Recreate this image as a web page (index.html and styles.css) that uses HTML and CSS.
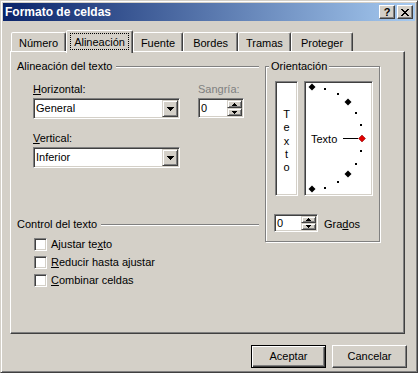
FILE: index.html
```html
<!DOCTYPE html>
<html lang="es">
<head>
    <meta charset="UTF-8">
    <meta name="viewport" content="width=device-width, initial-scale=1.0">
    <title>Formato de celdas</title>
    <link rel="stylesheet" href="styles.css">
</head>
<body>

    <div class="window">
        <div class="titlebar">
            <span class="title">Formato de celdas</span>
            <div class="caption-buttons">
                <span class="cap-btn help">?</span>
                <span class="cap-btn close">
                    <svg width="8" height="7" viewBox="0 0 8 7" shape-rendering="crispEdges">
                        <path d="M0 0h2v1h1v1h2v-1h1v-1h2v1h-1v1h-1v1h-1v1h1v1h1v1h1v1h-2v-1h-1v-1h-2v1h-1v1h-2v-1h1v-1h1v-1h1v-1h-1v-1h-1v-1h-1z" fill="#000"/>
                    </svg>
                </span>
            </div>
        </div>

        <div class="tabs">
            <div class="tab">Número</div>
            <div class="tab active"><span class="focus">Alineación</span></div>
            <div class="tab">Fuente</div>
            <div class="tab tab-wide">Bordes</div>
            <div class="tab">Tramas</div>
            <div class="tab tab-wide">Proteger</div>
        </div>

        <div class="panel">
            <div class="col-left">
                <div class="group-head"><span>Alineación del texto</span><i class="rule"></i></div>

                <div class="fields-row">
                    <div class="field field-horizontal">
                        <label><u>H</u>orizontal:</label>
                        <div class="combo sunken">
                            <span class="combo-value">General</span>
                            <span class="drop-btn raised">
                                <svg width="7" height="4" viewBox="0 0 7 4" shape-rendering="crispEdges"><path d="M0 0h7v1h-1v1h-1v1h-1v1h-1v-1h-1v-1h-1v-1h-1z" fill="#000"/></svg>
                            </span>
                        </div>
                    </div>
                    <div class="field">
                        <label class="disabled">Sangría:</label>
                        <div class="spin sunken">
                            <span class="spin-value">0</span>
                            <span class="spin-btns">
                                <span class="spin-btn raised"><svg width="5" height="3" viewBox="0 0 5 3" shape-rendering="crispEdges"><path d="M2 0h1v1h1v1h1v1h-5v-1h1v-1h1z" fill="#000"/></svg></span>
                                <span class="spin-btn raised"><svg width="5" height="3" viewBox="0 0 5 3" shape-rendering="crispEdges"><path d="M0 0h5v1h-1v1h-1v1h-1v-1h-1v-1h-1z" fill="#000"/></svg></span>
                            </span>
                        </div>
                    </div>
                </div>

                <div class="field field-vertical">
                    <label><u>V</u>ertical:</label>
                    <div class="combo sunken">
                        <span class="combo-value">Inferior</span>
                        <span class="drop-btn raised">
                            <svg width="7" height="4" viewBox="0 0 7 4" shape-rendering="crispEdges"><path d="M0 0h7v1h-1v1h-1v1h-1v1h-1v-1h-1v-1h-1v-1h-1z" fill="#000"/></svg>
                        </span>
                    </div>
                </div>

                <div class="group-head control-head"><span>Control del texto</span><i class="rule"></i></div>

                <div class="checks">
                    <div class="check"><span class="checkbox sunken"></span><span>Ajustar te<u>x</u>to</span></div>
                    <div class="check"><span class="checkbox sunken"></span><span><u>R</u>educir hasta ajustar</span></div>
                    <div class="check"><span class="checkbox sunken"></span><span><u>C</u>ombinar celdas</span></div>
                </div>
            </div>

            <div class="orient">
                <span class="legend">Orientación</span>
                <div class="orient-boxes">
                    <div class="vbox sunken"><div class="vtext">Texto</div></div>
                    <div class="dial sunken">
                        <svg width="65" height="111" viewBox="0 0 65 111">
                            <g fill="#000" shape-rendering="crispEdges">
                                <rect x="18" y="5" width="2" height="2"/>
                                <rect x="31" y="10" width="2" height="2"/>
                                <rect x="49" y="29" width="2" height="2"/>
                                <rect x="54" y="41" width="2" height="2"/>
                                <rect x="54" y="67" width="2" height="2"/>
                                <rect x="49" y="80" width="2" height="2"/>
                                <rect x="31" y="98" width="2" height="2"/>
                                <rect x="18" y="104" width="2" height="2"/>
                                <rect x="37" y="55" width="15" height="1"/>
                            </g>
                            <g fill="#000">
                                <polygon points="6,0.5 9.5,4 6,7.5 2.5,4"/>
                                <polygon points="42,15.5 45.5,19 42,22.5 38.5,19"/>
                                <polygon points="42,87.5 45.5,91 42,94.5 38.5,91"/>
                                <polygon points="6,102.5 9.5,106 6,109.5 2.5,106"/>
                            </g>
                            <polygon points="56,52 59.5,55.5 56,59 52.5,55.5" fill="#e00000" stroke="#800000" stroke-width="0.5"/>
                            <text x="5" y="60" font-family="Liberation Sans, Arial, sans-serif" font-size="11">Texto</text>
                        </svg>
                    </div>
                </div>
                <div class="degrees">
                    <div class="spin spin-small sunken">
                        <span class="spin-value">0</span>
                        <span class="spin-btns">
                            <span class="spin-btn raised"><svg width="5" height="3" viewBox="0 0 5 3" shape-rendering="crispEdges"><path d="M2 0h1v1h1v1h1v1h-5v-1h1v-1h1z" fill="#000"/></svg></span>
                            <span class="spin-btn raised"><svg width="5" height="3" viewBox="0 0 5 3" shape-rendering="crispEdges"><path d="M0 0h5v1h-1v1h-1v1h-1v-1h-1v-1h-1z" fill="#000"/></svg></span>
                        </span>
                    </div>
                    <span class="degrees-label">Gra<u>d</u>os</span>
                </div>
            </div>
        </div>

        <div class="footer">
            <button class="btn default">Aceptar</button>
            <button class="btn">Cancelar</button>
        </div>
    </div>

</body>
</html>
```
FILE: styles.css
```css
* {
    box-sizing: border-box;
}

body {
    margin: 0;
    background: #fff;
    font-family: "Liberation Sans", Arial, sans-serif;
    font-size: 11px;
    line-height: 13px;
    color: #000;
}

u {
    text-decoration: underline;
    text-underline-offset: 1px;
}

/* window frame */
.window {
    width: 418px;
    height: 373px;
    padding: 2px;
    background: #d4d0c8;
    border: 1px solid;
    border-color: #d4d0c8 #404040 #404040 #d4d0c8;
    box-shadow: inset 1px 1px #fff, inset -1px -1px #808080;
}

.titlebar {
    height: 18px;
    display: flex;
    align-items: center;
    justify-content: space-between;
    padding: 0 2px 0 2px;
    background: linear-gradient(to right, #0a246a, #a6caf0);
}

.title {
    color: #fff;
    font-weight: bold;
    font-size: 12px;
}

.caption-buttons {
    display: flex;
    gap: 2px;
}

.cap-btn {
    width: 16px;
    height: 14px;
    display: flex;
    align-items: center;
    justify-content: center;
    background: #d4d0c8;
    border: 1px solid;
    border-color: #fff #404040 #404040 #fff;
    box-shadow: inset -1px -1px #808080;
    font-weight: bold;
    font-size: 11px;
    line-height: 12px;
}

/* tabs */
.tabs {
    display: flex;
    align-items: flex-end;
    height: 21px;
    margin-top: 9px;
    padding-left: 8px;
}

.tab {
    height: 19px;
    padding: 4px 7px 0;
    border: 1px solid;
    border-bottom: 0;
    border-color: #fff #404040 transparent #fff;
    border-radius: 2px 2px 0 0;
    box-shadow: inset -1px 0 #808080;
    background: #d4d0c8;
    white-space: nowrap;
}

.tab-wide {
    padding: 4px 9px 0;
}

.tab.active {
    height: 23px;
    margin-bottom: -2px;
    padding: 3px 4px 0;
    position: relative;
    z-index: 1;
}

.focus {
    display: inline-block;
    padding: 2px 3px 0;
    height: 15px;
    outline: 1px dotted #000;
}

/* panel */
.panel {
    display: flex;
    width: 395px;
    height: 283px;
    margin-left: 7px;
    padding: 8px 0 0 6px;
    border: 1px solid;
    border-color: #fff #404040 #404040 #fff;
    box-shadow: inset -1px -1px #808080;
}

.col-left {
    width: 242px;
}

.group-head {
    display: flex;
    align-items: center;
    gap: 4px;
}

.rule {
    flex: 1;
    height: 2px;
    border-top: 1px solid #808080;
    border-bottom: 1px solid #fff;
}

.fields-row {
    display: flex;
    margin: 10px 0 0 16px;
}

.field label {
    display: block;
}

.field-horizontal {
    width: 165px;
}

.field-vertical {
    margin: 13px 0 0 16px;
}

.disabled {
    color: #808080;
}

.sunken {
    border: 1px solid;
    border-color: #808080 #fff #fff #808080;
    box-shadow: inset 1px 1px #404040, inset -1px -1px #d4d0c8;
    padding: 1px;
    background: #fff;
}

.raised {
    display: flex;
    align-items: center;
    justify-content: center;
    background: #d4d0c8;
    border: 1px solid;
    border-color: #d4d0c8 #404040 #404040 #d4d0c8;
    box-shadow: inset 1px 1px #fff, inset -1px -1px #808080;
}

.combo {
    display: flex;
    width: 147px;
    height: 21px;
    margin-top: 2px;
}

.combo-value {
    flex: 1;
    line-height: 17px;
    padding-left: 1px;
}

.drop-btn {
    width: 16px;
    height: 17px;
}

.spin {
    display: flex;
    width: 46px;
    height: 20px;
    margin-top: 2px;
}

.spin-value {
    flex: 1;
    line-height: 16px;
    padding-left: 1px;
}

.spin-btns {
    display: flex;
    flex-direction: column;
    width: 15px;
}

.spin-btn {
    height: 8px;
}

.spin-small {
    width: 44px;
    height: 18px;
    margin-top: 0;
}

.spin-small .spin-value {
    line-height: 14px;
}

.spin-small .spin-btn {
    height: 7px;
}

.control-head {
    margin-top: 50px;
}

.checks {
    display: flex;
    flex-direction: column;
    gap: 5px;
    margin-top: 7px;
    padding-left: 17px;
}

.check {
    display: flex;
    align-items: center;
    gap: 4px;
}

.checkbox {
    width: 13px;
    height: 13px;
}

/* orientation group */
.orient {
    width: 115px;
    height: 176px;
    margin: 6px 0 0 6px;
    border: 1px solid #808080;
    box-shadow: inset 1px 1px #fff, 1px 1px #fff;
}

.legend {
    display: block;
    width: max-content;
    margin: -7px 0 0 3px;
    padding: 0 2px;
    background: #d4d0c8;
}

.orient-boxes {
    display: flex;
    gap: 6px;
    margin: 8px 0 0 9px;
}

.vbox {
    width: 23px;
    height: 115px;
}

.vtext {
    width: 7px;
    margin: 25px auto 0;
    line-height: 13.3px;
    text-align: center;
    word-break: break-all;
}

.dial {
    width: 69px;
    height: 115px;
}

.dial svg {
    display: block;
}

.degrees {
    display: flex;
    align-items: center;
    gap: 6px;
    margin: 18px 0 0 8px;
}

.degrees-label {
    margin-top: 2px;
}

/* footer buttons */
.footer {
    display: flex;
    justify-content: flex-end;
    gap: 6px;
    margin-top: 11px;
    padding-right: 8px;
}

.btn {
    width: 75px;
    height: 23px;
    padding: 0;
    font: inherit;
    color: #000;
    background: #d4d0c8;
    border: 1px solid;
    border-color: #fff #404040 #404040 #fff;
    box-shadow: inset -1px -1px #808080;
}

.btn.default {
    border-color: #000;
    box-shadow: inset 1px 1px #fff, inset -1px -1px #404040, inset -2px -2px #808080;
}
```
